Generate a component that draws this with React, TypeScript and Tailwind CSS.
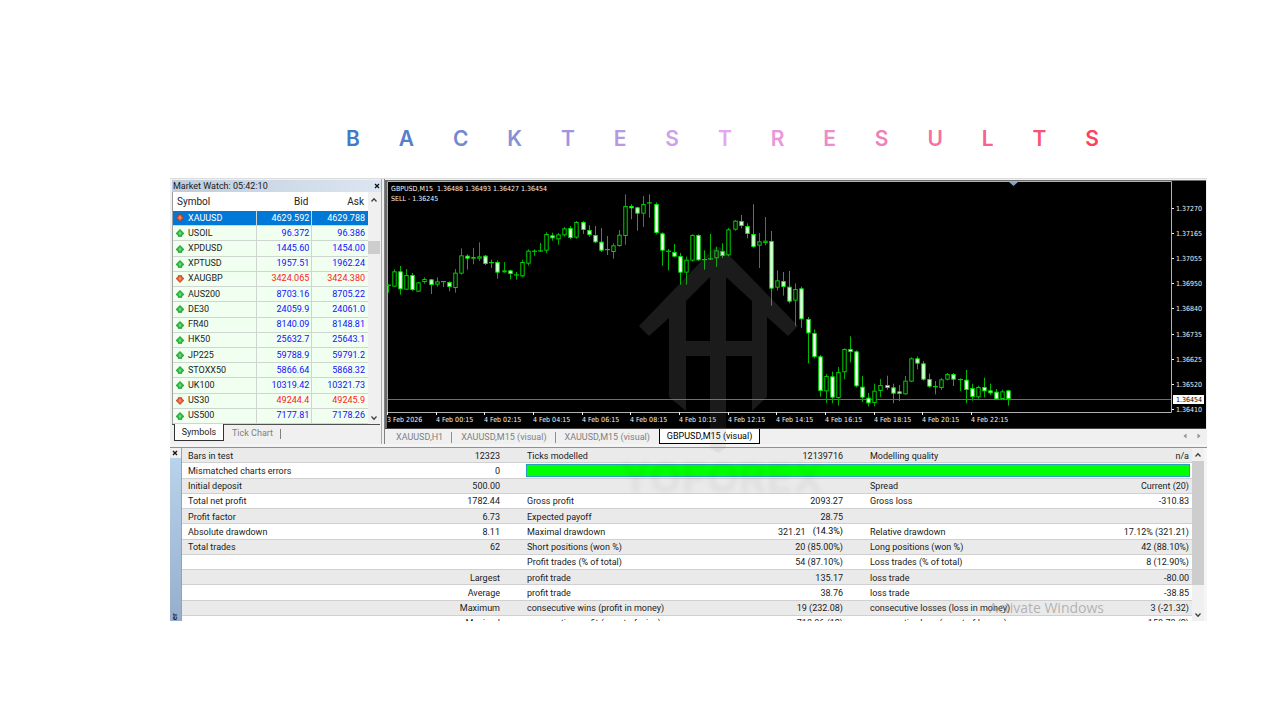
import React from "react";

const TITLE: [string, string][] = [
  ["B", "text-[#4479c4]"],
  ["A", "text-[#5580cb]"],
  ["C", "text-[#7189d2]"],
  ["K", "text-[#8890d6]"],
  ["T", "text-[#a095de]"],
  ["E", "text-[#b799e2]"],
  ["S", "text-[#cf9fe9]"],
  ["T", "text-[#e6a5f0]"],
  ["R", "text-[#eb97dc]"],
  ["E", "text-[#ee8bcb]"],
  ["S", "text-[#f17fb8]"],
  ["U", "text-[#f571a3]"],
  ["L", "text-[#f8628c]"],
  ["T", "text-[#fb5274]"],
  ["S", "text-[#fe415b]"],
];

type Quote = { symbol: string; bid: string; ask: string; up: boolean };

const q = (symbol: string, bid: string, ask: string, up = true): Quote => ({ symbol, bid, ask, up });

const QUOTES: Quote[] = [
  q("XAUUSD", "4629.592", "4629.788", false),
  q("USOIL", "96.372", "96.386"),
  q("XPDUSD", "1445.60", "1454.00"),
  q("XPTUSD", "1957.51", "1962.24"),
  q("XAUGBP", "3424.065", "3424.380", false),
  q("AUS200", "8703.16", "8705.22"),
  q("DE30", "24059.9", "24061.0"),
  q("FR40", "8140.09", "8148.81"),
  q("HK50", "25632.7", "25643.1"),
  q("JP225", "59788.9", "59791.2"),
  q("STOXX50", "5866.64", "5868.32"),
  q("UK100", "10319.42", "10321.73"),
  q("US30", "49244.4", "49245.9", false),
  q("US500", "7177.81", "7178.26"),
];

const RESULTS: string[][] = [
  ["Bars in test", "12323", "Ticks modelled", "12139716", "Modelling quality", "n/a"],
  ["Mismatched charts errors", "0"],
  ["Initial deposit", "500.00", "", "", "Spread", "Current (20)"],
  ["Total net profit", "1782.44", "Gross profit", "2093.27", "Gross loss", "-310.83"],
  ["Profit factor", "6.73", "Expected payoff", "28.75", "", ""],
  ["Absolute drawdown", "8.11", "Maximal drawdown", "321.21|(14.3%)", "Relative drawdown", "17.12% (321.21)"],
  ["Total trades", "62", "Short positions (won %)", "20 (85.00%)", "Long positions (won %)", "42 (88.10%)"],
  ["", "", "Profit trades (% of total)", "54 (87.10%)", "Loss trades (% of total)", "8 (12.90%)"],
  ["", "Largest", "profit trade", "135.17", "loss trade", "-80.00"],
  ["", "Average", "profit trade", "38.76", "loss trade", "-38.85"],
  ["", "Maximum", "consecutive wins (profit in money)", "19 (232.08)", "consecutive losses (loss in money)", "3 (-21.32)"],
  ["", "Maximal", "consecutive profit (count of wins)", "718.06 (12)", "consecutive loss (count of losses)", "-158.78 (2)"],
];

/* Candle: high, body top, body bottom, low (thirds of a pixel from the block's base), kind.
   u = rising (hollow), d = falling (filled), x = doji */
type Candle = [number, number, number, number, "u" | "d" | "x"];

const BLOCKS: { base: number; candles: Candle[] }[] = [
  {
    base: 176,
    candles: [
      [325, 326, 329, 350, "x"], [280, 286, 332, 332, "u"], [270, 286, 340, 356, "d"], [279, 297, 341, 341, "u"],
      [291, 297, 342, 345, "d"], [318, 319, 347, 347, "u"], [304, 309, 318, 323, "u"], [309, 310, 327, 354, "d"],
      [304, 316, 326, 332, "u"], [315, 315, 318, 333, "x"], [316, 318, 333, 346, "d"], [279, 290, 336, 350, "u"],
      [217, 238, 293, 296, "u"], [235, 239, 248, 281, "d"], [216, 243, 248, 265, "u"], [199, 241, 248, 255, "u"],
      [237, 239, 264, 267, "d"], [251, 258, 262, 276, "x"], [253, 258, 290, 308, "d"], [258, 283, 289, 290, "u"],
      [281, 283, 294, 310, "d"], [288, 295, 299, 311, "x"], [251, 258, 301, 303, "u"], [220, 224, 263, 269, "u"],
      [220, 224, 228, 239, "x"], [201, 223, 227, 228, "x"], [169, 174, 224, 231, "u"], [170, 178, 187, 194, "d"],
      [171, 175, 190, 206, "u"], [153, 157, 178, 182, "u"], [150, 156, 186, 189, "d"], [135, 138, 185, 188, "u"],
      [135, 138, 162, 174, "d"], [148, 162, 177, 182, "d"], [150, 177, 199, 201, "d"], [156, 197, 224, 228, "d"],
      [180, 219, 226, 237, "x"], [202, 208, 228, 248, "u"], [162, 176, 210, 212, "u"], [55, 90, 180, 206, "u"],
      [85, 90, 97, 130, "d"], [92, 94, 113, 164, "d"], [60, 84, 113, 153, "u"], [55, 79, 82, 125, "x"],
      [79, 84, 171, 175, "d"], [169, 172, 224, 269, "d"], [219, 224, 227, 283, "x"], [204, 228, 242, 243, "d"],
      [231, 240, 290, 326, "d"], [242, 251, 290, 326, "u"], [175, 177, 254, 257, "u"], [175, 177, 253, 254, "d"],
      [223, 249, 252, 281, "x"], [174, 247, 251, 252, "x"], [212, 223, 247, 273, "u"], [202, 225, 240, 246, "d"],
      [156, 160, 238, 241, "u"], [132, 134, 161, 164, "u"], [117, 135, 150, 157, "d"], [142, 150, 174, 187, "d"],
      [85, 174, 213, 215, "d"], [171, 196, 209, 276, "u"], [123, 194, 201, 208, "u"],
    ],
  },
  {
    base: 220,
    candles: [
      [33, 63, 206, 257, "d"], [151, 181, 203, 212, "u"], [156, 183, 201, 227, "d"], [153, 200, 245, 250, "d"],
      [190, 207, 242, 317, "u"], [200, 205, 298, 323, "d"], [291, 297, 340, 430, "d"], [328, 339, 411, 415, "d"],
      [405, 409, 513, 530, "d"], [462, 468, 514, 550, "u"], [455, 469, 533, 550, "d"], [441, 456, 534, 557, "u"],
      [385, 387, 457, 478, "u"], [349, 387, 396, 427, "d"], [391, 394, 499, 502, "d"], [468, 500, 533, 546, "d"],
      [519, 533, 550, 559, "d"], [491, 512, 549, 559, "u"], [477, 495, 513, 531, "u"], [467, 495, 504, 509, "d"],
      [491, 502, 521, 550, "d"], [495, 514, 522, 543, "d"], [468, 482, 523, 524, "u"], [412, 415, 485, 486, "u"],
      [409, 415, 431, 448, "d"], [423, 430, 479, 482, "d"], [461, 477, 500, 503, "d"], [483, 498, 503, 523, "x"],
    ],
  },
  {
    base: 330,
    candles: [
      [144, 148, 174, 180, "u"], [129, 132, 149, 151, "u"], [129, 132, 149, 168, "d"], [145, 147, 151, 183, "x"],
      [120, 149, 180, 220, "d"], [161, 174, 201, 212, "d"], [167, 171, 202, 206, "u"], [143, 171, 184, 202, "d"],
      [161, 181, 190, 195, "d"], [177, 185, 208, 210, "d"], [179, 184, 207, 209, "u"], [180, 181, 207, 227, "d"],
    ],
  },
];

const CANDLES: Candle[] = BLOCKS.flatMap(({ base, candles }) =>
  candles.map(([h, t, b, l, k]): Candle => [base + h / 3, base + t / 3, base + b / 3, base + l / 3, k]),
);

const PRICES = ["1.37270", "1.37165", "1.37055", "1.36950", "1.36840", "1.36735", "1.36625", "1.36520", "1.36410"];
const TIMES = ["3 Feb 2026", ...["00", "02", "04", "06", "08", "10", "12", "14", "16", "18", "20", "22"].map((h) => `4 Feb ${h}:15`)];

function Chevron({ up = false }: { up?: boolean }) {
  return (
    <svg viewBox="0 0 8 6" className="h-[6px] w-2" fill="none" stroke="#404040" strokeWidth="1.3">
      <path d={up ? "M1.5 4.5 4 1.8 6.5 4.5" : "M1.5 1.5 4 4.2 6.5 1.5"} />
    </svg>
  );
}

function CloseMark() {
  return (
    <svg viewBox="0 0 6 6" className="h-[6px] w-[6px]" stroke="#111" strokeWidth="1.3">
      <path d="M1 1 5 5M5 1 1 5" />
    </svg>
  );
}

function TickArrow({ up }: { up: boolean }) {
  return (
    <svg viewBox="0 0 8 8" className="h-2 w-2 shrink-0">
      <g transform={up ? undefined : "rotate(180 4 4)"}>
        <path
          d="M4 .5 7.600 4.200V4.900L5.800 5.600V7.300H2.200V5.600L.4 4.900V4.200Z"
          fill={up ? "#2fc247" : "#ef6038"}
          stroke={up ? "#0d8a22" : "#a8361a"}
          strokeWidth=".8"
        />
        <path d="M4 3.200V5.800" stroke={up ? "#a8efb2" : "#ffb598"} strokeWidth="1" />
      </g>
    </svg>
  );
}

function MarketWatch() {
  return (
    <section aria-label="Market Watch" className="flex w-[212px] shrink-0 flex-col border-r border-[#a8a8a8] pl-0.5">
      <header className="mt-px flex h-3 items-center justify-between bg-linear-to-r from-[#bfcddb] to-[#dce6f2] pl-px">
        <h2 className="text-[9px] text-[#1a1a1a]">Market Watch: 05:42:10</h2>
        <button type="button" aria-label="Close Market Watch" className="flex h-3 w-2 items-center justify-center">
          <CloseMark />
        </button>
      </header>
      <div className="mr-px flex border-l border-[#a0a0a0]">
        <table className="block grow text-[9px]">
          <thead className="block">
            <tr className="grid h-[19px] grid-cols-[84fr_56fr_56fr] items-center bg-white text-[10px] text-[#222]">
              <th className="pl-1 text-left font-normal">Symbol</th>
              <th className="pr-1 text-right font-normal">Bid</th>
              <th className="pr-1 text-right font-normal">Ask</th>
            </tr>
          </thead>
          <tbody className="grid h-[213px] grid-rows-[repeat(14,minmax(0,1fr))]">
            {QUOTES.map((row, i) => (
              <tr
                key={row.symbol}
                className={`grid grid-cols-[84fr_56fr_56fr] border-b border-[#cfd6cf] ${i === 0 ? "bg-[#0078d7]" : "bg-[#f0fff0]"}`}
              >
                <td className={`flex items-center gap-1 border-r border-[#cfd6cf] pl-[3px] ${i === 0 ? "text-white" : "text-[#1c1c1c]"}`}>
                  <TickArrow up={row.up} />
                  {row.symbol}
                </td>
                {[row.bid, row.ask].map((v, c) => (
                  <td
                    key={c}
                    className={`flex items-center justify-end ${c === 0 ? "border-r border-[#cfd6cf] pr-0.5" : "pr-[3px]"} ${
                      i === 0 ? "text-white" : row.up ? "text-[#1010ff]" : "text-[#ff1a1a]"
                    }`}
                  >
                    {v}
                  </td>
                ))}
              </tr>
            ))}
          </tbody>
        </table>
        <div className="flex w-3 shrink-0 flex-col items-center justify-between bg-[#f0f0f0]">
          <button type="button" aria-label="Scroll quotes up" className="flex h-4 w-3 items-center justify-center">
            <Chevron up />
          </button>
          <div className="mt-[33px] h-[13px] w-full bg-[#cdcdcd]" />
          <div className="grow" />
          <button type="button" aria-label="Scroll quotes down" className="flex h-3 w-3 items-center justify-center">
            <Chevron />
          </button>
        </div>
      </div>
      <div className="mr-px flex h-[17px] items-start border-t border-[#505050] pl-0.5 text-[9px]">
        <button type="button" className="-mt-px flex h-[17px] w-[50px] items-center justify-center border border-t-0 border-[#333] bg-white pt-px text-[#222]">
          Symbols
        </button>
        <button type="button" className="flex h-4 items-center pl-2 text-[#808080]">
          Tick Chart
        </button>
        <span className="mt-1 ml-[7px] h-[10px] w-px bg-[#808080]" />
      </div>
    </section>
  );
}

function PriceChart() {
  return (
    <svg
      viewBox="385 180 821 248"
      preserveAspectRatio="xMinYMin slice"
      className="block h-[248px] w-full bg-black font-['DejaVu_Sans_Condensed','DejaVu_Sans',sans-serif] text-[7px]"
      role="img"
      aria-label="GBPUSD M15 candlestick chart"
    >
      <rect x="385" y="180" width="821" height="1" fill="#6c706c" />
      <rect x="385" y="180" width="2" height="248" fill="#6a6a6a" />
      <path d="M387.5 412.5V181.5H1171.5V412.5Z" fill="none" stroke="#b0b0b0" />
      <path d="M388 399.5H1171" stroke="#66707c" />
      <path d="M1009 182H1018L1013.500 186Z" fill="#8aa0b8" />
      {CANDLES.map(([h, t, b, l, k], i) => {
        const x = Math.round(388 + i * 6.08);
        return (
          <g key={i}>
            <rect x={x} y={h} width="1" height={Math.max(l - h, 1)} fill={k === "u" ? "#00a800" : "#00b800"} />
            {k === "x" ? (
              <rect x={x - 2} y={t} width="5" height="1.2" fill="#00d000" />
            ) : (
              <rect
                x={x - 1.2}
                y={t + 0.5}
                width="3.400"
                height={Math.max(b - t - 1, 0.8)}
                fill={k === "u" ? "#000" : "#fff"}
                stroke={k === "u" ? "#00d000" : "#00f000"}
              />
            )}
          </g>
        );
      })}
      <g fill="#f4f4f4">
        <text x="391" y="191" xmlSpace="preserve">GBPUSD,M15  1.36488 1.36493 1.36427 1.36454</text>
        <text x="391" y="201">SELL - 1.36245</text>
        {PRICES.map((p, i) => (
          <g key={p}>
            <rect x="1172" y={Math.round(208 + i * 25.1)} width="2" height="1" />
            <text x="1176" y={Math.round(211 + i * 25.1)}>{p}</text>
          </g>
        ))}
        {TIMES.map((t, i) => (
          <g key={t}>
            <rect x={Math.round(387 + i * 48.65)} y="412" width="1" height="3" />
            <text x={Math.round(387 + i * 48.65)} y="422">{t}</text>
          </g>
        ))}
      </g>
      <rect x="1173" y="395" width="31" height="9" fill="#fff" />
      <text x="1176" y="402" fill="#000">1.36454</text>
    </svg>
  );
}

function ChartTabs() {
  const idle = "flex h-[11px] items-center border-r border-[#909090] pr-2 pl-[9px] text-[#808080]";
  return (
    <nav aria-label="Charts" className="flex h-4 items-start border-t border-[#444] bg-[#f0f0f0] pl-0.5 text-[9px]">
      <div className="mt-[3px] flex">
        <button type="button" className={idle}>XAUUSD,H1</button>
        <button type="button" className={idle}>XAUUSD,M15 (visual)</button>
        <button type="button" className="flex h-[11px] items-center px-[9px] text-[#808080]">XAUUSD,M15 (visual)</button>
      </div>
      <button type="button" className="flex h-[15px] items-center border border-t-0 border-black bg-white px-[7px] pt-px text-black">
        GBPUSD,M15 (visual)
      </button>
      <div className="ml-auto flex gap-2 pt-1 pr-1">
        <button type="button" aria-label="Previous tabs">
          <svg viewBox="0 0 6 6" className="h-[6px] w-[6px]" fill="#909090"><path d="M4.500.5V5.500L1.500 3Z" /></svg>
        </button>
        <button type="button" aria-label="Next tabs">
          <svg viewBox="0 0 6 6" className="h-[6px] w-[6px]" fill="#909090"><path d="M1.500.5V5.500L4.500 3Z" /></svg>
        </button>
      </div>
    </nav>
  );
}

const CELL = [
  "pl-1.5",
  "justify-end pr-[13px]",
  "pl-3.5",
  "justify-end pr-[13px]",
  "pl-3.5",
  "justify-end pr-[3px]",
];

function Report() {
  return (
    <section aria-label="Strategy tester report" className="flex h-[173px] overflow-hidden">
      <div className="flex w-3 shrink-0 flex-col border-r border-[#a0a0a0] bg-[#f0f0f0]">
        <button type="button" aria-label="Close tester" className="flex h-[10px] items-center pl-0.5">
          <CloseMark />
        </button>
        <div className="flex grow items-end overflow-hidden bg-linear-to-b from-[#bad3ec] to-[#96aecb]">
          <span className="rotate-180 px-px text-[8px] leading-[9px] font-semibold text-[#223] [writing-mode:vertical-rl]">er</span>
        </div>
      </div>
      <table className="block grow text-[9px] text-[#1a1a1a]">
        <tbody className="grid h-[183px] grid-rows-[repeat(12,minmax(0,1fr))]">
          {RESULTS.map((row, i) => (
            <tr
              key={i}
              className={`grid grid-cols-[163fr_168fr_187fr_156fr_174fr_162fr] border-b border-[#d0d0d0] ${i % 2 ? "bg-white" : "bg-[#eaeaea]"}`}
            >
              {row.map((v, c) => (
                <td key={c} className={`flex items-center pt-0.5 whitespace-nowrap ${CELL[c]}`}>
                  {v.includes("|") ? (
                    <>
                      <span>{v.split("|")[0]}</span>
                      <span className="pb-px pl-[7px] text-black">{v.split("|")[1]}</span>
                    </>
                  ) : (
                    v
                  )}
                </td>
              ))}
              {row.length === 2 && (
                <td className="col-span-4 flex items-center pr-0.5 pl-[13px]">
                  <div className="h-[13px] w-full border border-[#2aa0c0] bg-[#00ff00]" />
                </td>
              )}
            </tr>
          ))}
        </tbody>
      </table>
      <div className="flex w-3 shrink-0 flex-col items-center bg-[#f0f0f0]">
        <button type="button" aria-label="Scroll report up" className="flex h-[13px] items-center justify-center">
          <Chevron up />
        </button>
        <div className="h-[124px] w-full bg-[#cdcdcd]" />
        <div className="grow" />
        <button type="button" aria-label="Scroll report down" className="flex h-[13px] items-center justify-center">
          <Chevron />
        </button>
      </div>
      <div className="w-[3px] shrink-0 bg-[#f6f6f6]" />
    </section>
  );
}

function BrandMark() {
  return (
    <div aria-hidden="true" className="pointer-events-none absolute top-[69px] left-[433px] flex w-[230px] flex-col items-center">
      <svg viewBox="638 247 160 207" className="h-[207px] w-40" fill="#808080">
        <path
          fillRule="evenodd"
          fillOpacity=".21"
          d="M713 249Q718 245 723 249L798 326 788 336 767 317V397L752 411V356H726V412H710V356H686V411L669 397V318L649 336 639 326ZM710 277 686 301V341H710ZM726 277V341H752V301Z"
        />
        <path d="M710 412H726V448L718 453 710 448Z" fillOpacity=".12" />
      </svg>
      <span className="pl-2 font-['Inter',sans-serif] text-[42px] leading-[46px] font-extrabold text-black/2 [text-shadow:0_1px_5px_rgb(0_0_0/0.04)]">
        YOFOREX
      </span>
    </div>
  );
}

export default function App() {
  return (
    <main className="min-h-screen bg-white pt-[125px] pr-[73px] pb-24 pl-[170px] font-['Roboto','Noto_Sans',sans-serif] leading-none">
      <h1
        aria-label="Backtest results"
        className="mr-[108px] ml-44 flex justify-between font-['Inter',sans-serif] text-[21px] leading-7 font-semibold"
      >
        {TITLE.map(([letter, color], i) => (
          <span key={i} className={color}>{letter}</span>
        ))}
      </h1>
      <div className="relative mt-[25px] overflow-hidden bg-[#f0f0f0]">
        <div className="flex border-t border-[#dcdcdc]">
          <MarketWatch />
          <div className="w-[3px] shrink-0 border-r border-[#808080]" />
          <div className="min-w-0 grow pt-px pr-px">
            <PriceChart />
            <ChartTabs />
          </div>
        </div>
        <div className="h-1 border-b border-[#909090] bg-[#f4f4f4]" />
        <Report />
        <BrandMark />
        <span className="pointer-events-none absolute right-[103px] bottom-1.5 font-['Open_Sans',sans-serif] text-[14px] leading-[14px] text-[#8a8a8a]/60">
          Activate Windows
        </span>
      </div>
    </main>
  );
}
